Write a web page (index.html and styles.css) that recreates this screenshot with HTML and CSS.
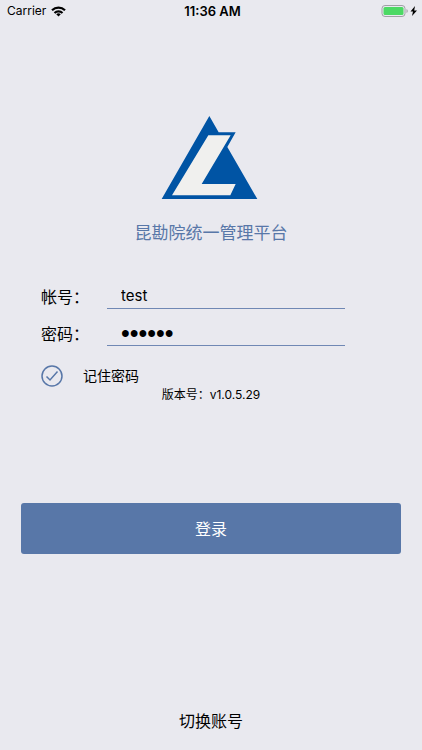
FILE: index.html
```html
<!DOCTYPE html>
<html lang="zh-CN">
<head>
    <meta charset="UTF-8">
    <meta name="viewport" content="width=device-width, initial-scale=1.0">
    <title>昆勘院统一管理平台</title>
    <link rel="stylesheet" href="styles.css">
</head>
<body>
    <header class="status-bar">
        <div class="carrier">
            <span>Carrier</span>
            <svg width="15" height="11" viewBox="0 0 30 22" aria-hidden="true">
                <g fill="none" stroke="#000" stroke-width="4.500">
                    <path d="M2 8.500a19 19 0 0 1 26 0"/>
                    <path d="M7 14a12 12 0 0 1 16 0"/>
                </g>
                <path d="M15 21l-4.500-4.500a7 7 0 0 1 9 0z"/>
            </svg>
        </div>
        <div class="time">11:36 AM</div>
        <div class="battery">
            <svg width="37" height="12" viewBox="0 0 37 12" aria-hidden="true">
                <rect x="1" y="0.500" width="23" height="11" rx="3" fill="none" stroke="#a0a0a5"/>
                <rect x="2.500" y="2" width="20" height="8" rx="1.500" fill="#4cd964"/>
                <path d="M25.500 4a2.200 2.200 0 0 1 0 4z" fill="#a0a0a5"/>
                <path d="M34 1l-4.500 5.500h2.500l-1 4.500 5-5.500h-2.800z"/>
            </svg>
        </div>
    </header>

    <main>
        <div class="brand">
            <svg width="101" height="85" viewBox="33 30 303 255" aria-hidden="true">
                <path fill="#0054a4" d="M178 33L35 282h287L232 126l25-44h-51z"/>
                <path fill="#f0f0ee" d="M175 91h67l-87 146h102l-16 34H66z"/>
            </svg>
            <h1>昆勘院统一管理平台</h1>
        </div>

        <form class="login-form">
            <div class="field">
                <label for="account">帐号：</label>
                <input type="text" id="account" value="test">
            </div>
            <div class="field">
                <label for="password">密码：</label>
                <input type="password" id="password" value="123456">
            </div>
            <div class="remember">
                <input type="checkbox" id="remember" checked>
                <svg class="tick" width="22" height="22" viewBox="0 0 22 22" fill="none" stroke="#5877a8" aria-hidden="true">
                    <circle cx="11" cy="11" r="10" stroke-width="1.500"/>
                    <path class="mark" d="M5.500 11.500l3.500 3.500 7.500-8.500" stroke-width="1.500"/>
                </svg>
                <label for="remember">记住密码</label>
            </div>
            <p class="version">版本号：v1.0.5.29</p>
            <button type="submit" class="login-button">登录</button>
        </form>
    </main>

    <footer>
        <a href="#">切换账号</a>
    </footer>
</body>
</html>
```

FILE: styles.css
```css
* {
    box-sizing: border-box;
}
body {
    font-family: Inter, "Noto Sans CJK SC", sans-serif;
    font-size: 16px;
    line-height: 24px;
    color: #000;
    background: #e9e9ef;
    margin: 0;
    display: flex;
    flex-direction: column;
    min-height: 100vh;
}
.status-bar {
    display: grid;
    grid-template-columns: 1fr auto 1fr;
    align-items: center;
    height: 22px;
    padding: 0 4px 0 7px;
    font-size: 12px;
    line-height: 22px;
}
.carrier {
    display: flex;
    align-items: center;
    gap: 5px;
}
.time {
    font-size: 13px;
    font-weight: 600;
}
.battery {
    display: flex;
    justify-content: flex-end;
}
main {
    flex: 1;
}
.brand {
    display: flex;
    flex-direction: column;
    align-items: center;
    padding-top: 93px;
}
h1 {
    margin: 21px 0 0;
    font-size: 17px;
    font-weight: 400;
    line-height: 24px;
    color: #5877a8;
}
.field {
    display: flex;
    align-items: center;
    height: 37px;
    margin: 0 77px 0 41px;
}
.field:first-child {
    margin-top: 33px;
}
.field label {
    width: 66px;
}
.field input {
    flex: 1;
    min-width: 0;
    height: 24px;
    padding: 0 14px;
    border: 0;
    border-bottom: 1px solid #7088b4;
    border-radius: 0;
    outline: 0;
    background: transparent;
    font: inherit;
    font-size: 15px;
    color: #000;
}
.field input[type="password"] {
    font-family: "Liberation Sans", Arial, sans-serif;
    font-size: 25px;
}
.remember {
    display: flex;
    align-items: center;
    height: 24px;
    margin: 12px 41px 0;
    font-size: 14px;
}
.remember input {
    appearance: none;
    width: 22px;
    height: 22px;
    margin: 0 -22px 0 0;
    opacity: 0;
}
.remember label {
    margin-left: 20px;
}
.tick {
    pointer-events: none;
}
.tick .mark {
    visibility: hidden;
}
.remember input:checked + .tick .mark {
    visibility: visible;
}
.version {
    margin: 0;
    font-size: 12px;
    line-height: 14px;
    text-align: center;
}
.login-button {
    display: block;
    width: calc(100% - 42px);
    height: 51px;
    margin: 101px 21px 0;
    border: 0;
    border-radius: 3px;
    background: #5877a8;
    color: #fff;
    font: inherit;
}
footer {
    padding: 17px 0;
    text-align: center;
}
footer a {
    color: #000;
    text-decoration: none;
}
```
